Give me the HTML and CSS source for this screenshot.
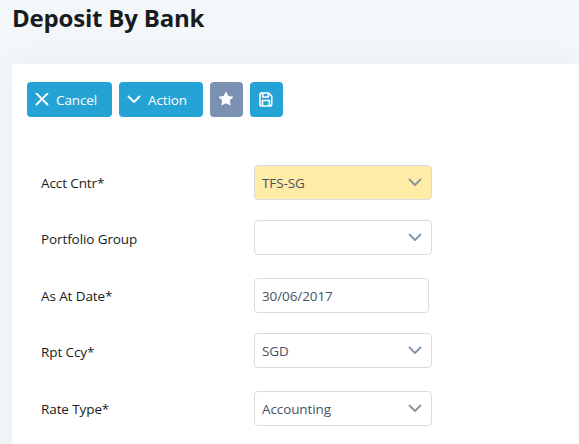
FILE: index.html
```html
<!DOCTYPE html>
<html lang="en">
<head>
    <meta charset="UTF-8">
    <meta name="viewport" content="width=device-width, initial-scale=1.0">
    <title>Deposit By Bank</title>
    <link rel="stylesheet" href="styles.css">
</head>
<body>

    <h1>Deposit By Bank</h1>

    <div class="card">
        <div class="toolbar">
            <button class="btn cancel" type="button">
                <svg width="14" height="14" viewBox="0 0 14 14"><path d="M1.500 .5l11 11M12.500 .5l-11 11"/></svg>
                <span>Cancel</span>
            </button>
            <button class="btn action" type="button">
                <svg width="14" height="14" viewBox="0 0 14 14"><path d="M1.500 3.500L7 9l5.500-5.500"/></svg>
                <span>Action</span>
            </button>
            <button class="btn icon star" type="button" aria-label="Favourite">
                <svg width="16" height="16" viewBox="0 0 16 16"><path d="M8 .5l2.400 4.600 5.100.7-3.700 3.600.9 5.200L8 12.200l-4.700 2.400.9-5.200L.5 5.800l5.100-.7z"/></svg>
            </button>
            <button class="btn icon save" type="button" aria-label="Save">
                <svg width="14" height="15" viewBox="0 0 14 15"><path d="M2.500 1h7.200L12.700 4v8.500a1.500 1.500 0 0 1-1.500 1.500H2.500A1.500 1.500 0 0 1 1 12.500v-10A1.500 1.500 0 0 1 2.500 1zM3.700 1v4h5.600V1M3.500 14V8.500h6.800V14"/></svg>
            </button>
        </div>

        <div class="form">
            <div class="row">
                <label>Acct Cntr*</label>
                <div class="field select required">
                    <span>TFS-SG</span>
                    <svg width="14" height="14" viewBox="0 0 14 14"><path d="M1.500 4.500L7 10l5.500-5.500"/></svg>
                </div>
            </div>
            <div class="row gap">
                <label>Portfolio Group</label>
                <div class="field select">
                    <span></span>
                    <svg width="14" height="14" viewBox="0 0 14 14"><path d="M1.500 4.500L7 10l5.500-5.500"/></svg>
                </div>
            </div>
            <div class="row">
                <label>As At Date*</label>
                <div class="field date"><span>30/06/2017</span></div>
            </div>
            <div class="row gap">
                <label>Rpt Ccy*</label>
                <div class="field select">
                    <span>SGD</span>
                    <svg width="14" height="14" viewBox="0 0 14 14"><path d="M1.500 4.500L7 10l5.500-5.500"/></svg>
                </div>
            </div>
            <div class="row">
                <label>Rate Type*</label>
                <div class="field select">
                    <span>Accounting</span>
                    <svg width="14" height="14" viewBox="0 0 14 14"><path d="M1.500 4.500L7 10l5.500-5.500"/></svg>
                </div>
            </div>
        </div>
    </div>

</body>
</html>
```

FILE: styles.css
```css
* {
    box-sizing: border-box;
}
body {
    margin: 0;
    height: 444px;
    overflow: hidden;
    background-color: #f3f7fa;
    color: #181c20;
    font-family: "Segoe UI", "Open Sans", "Noto Sans", sans-serif;
    font-size: 13.5px;
    letter-spacing: -0.1px;
}
h1 {
    margin: 0;
    padding: 2px 0 0 12px;
    height: 64px;
    font-size: 24px;
    line-height: 32px;
    font-weight: 700;
    letter-spacing: -0.2px;
}
.card {
    margin-left: 12px;
    height: 400px;
    padding: 18px 0 0 15px;
    background-color: #fff;
    border-radius: 4px 0 0 0;
    box-shadow: 0 0 30px rgba(70, 100, 120, 0.06);
}
.toolbar {
    display: flex;
    gap: 7px;
}
.btn {
    display: flex;
    align-items: center;
    height: 35px;
    padding: 0 0 0 8px;
    border: 0;
    border-radius: 4px;
    background-color: #26a3d5;
    color: #fff;
    font: inherit;
    letter-spacing: -0.1px;
}
.btn svg {
    margin-right: 7px;
}
.btn span {
    padding-top: 1px;
}
.btn.cancel {
    width: 85px;
}
.btn.action {
    width: 84px;
}
.btn.icon {
    width: 33px;
    padding: 0;
    justify-content: center;
}
.btn.icon svg {
    margin: 0 1px 1px 0;
}
.btn.star {
    background-color: #7b91b3;
}
svg {
    fill: none;
    stroke: currentColor;
    stroke-width: 1.8;
    stroke-linecap: round;
    stroke-linejoin: round;
}
.star svg {
    fill: #fff;
    stroke: none;
}
.save svg {
    stroke-width: 1.6;
}
.form {
    padding: 48px 0 0 14px;
}
.row {
    display: flex;
    align-items: center;
    height: 35px;
    margin-bottom: 20px;
}
.row.gap {
    margin-bottom: 23px;
}
.row label {
    width: 213px;
    padding-top: 1px;
}
.row.gap label {
    padding-top: 3px;
}
.field {
    display: flex;
    align-items: center;
    justify-content: space-between;
    height: 35px;
    padding: 1px 9px 0 7px;
    border: 1px solid #d8dae7;
    border-radius: 4px;
    background-color: #fff;
    color: #465364;
}
.field.select {
    width: 178px;
}
.field.date {
    width: 175px;
}
.field.required {
    background-color: #ffeca6;
}
.field svg {
    color: #8294a8;
    margin-top: -3px;
}
```
